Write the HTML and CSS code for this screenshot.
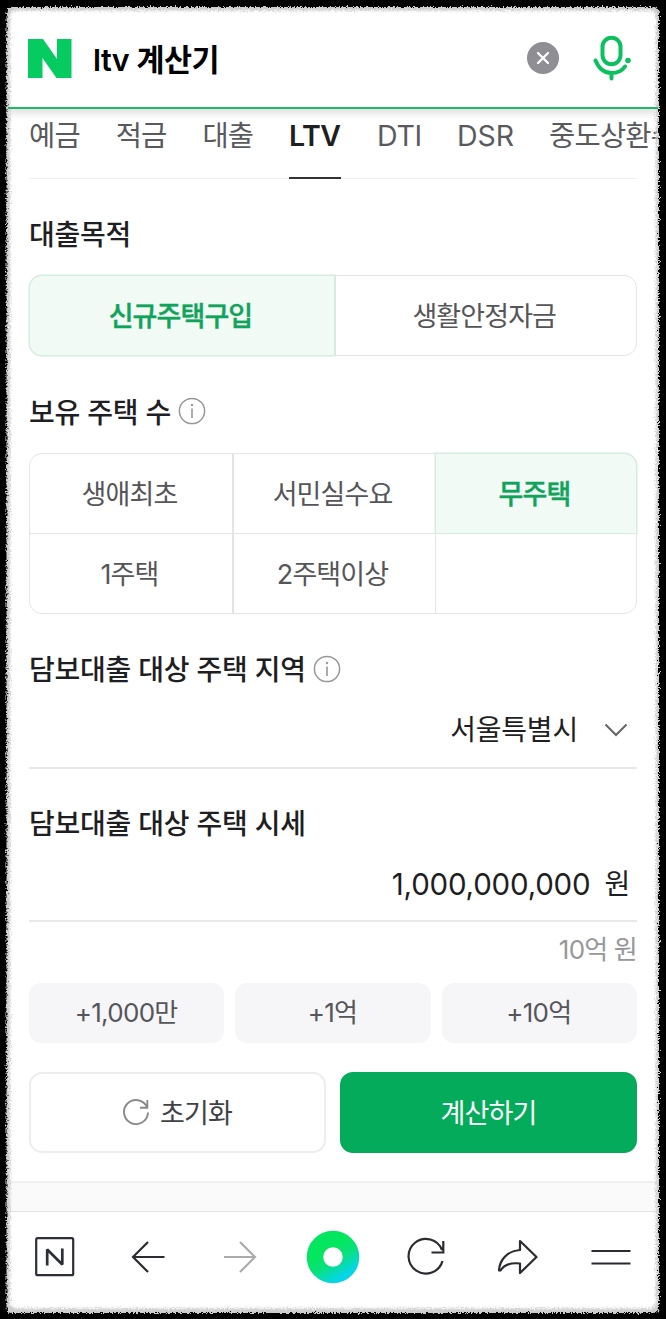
FILE: index.html
```html
<!DOCTYPE html>
<html lang="ko">
<head>
<meta charset="utf-8">
<title>ltv 계산기</title>
<link rel="stylesheet" href="styles.css">
</head>
<body>
<div class="screen">
  <header class="search">
    <svg class="logo" width="44" height="40" viewBox="0 0 44 40"><path d="M0 0H15L29 20V0H43.500V39H28.500L14.500 19V39H0Z" fill="#06cb60"/></svg>
    <span class="query">ltv 계산기</span>
    <svg class="clear" width="32" height="32" viewBox="0 0 32 32"><circle cx="16" cy="16" r="16" fill="#8e8e93"/><path d="M11 11L21 21M21 11L11 21" stroke="#fff" stroke-width="2.300" stroke-linecap="round"/></svg>
    <svg class="mic" width="38" height="46" viewBox="0 0 38 46" fill="none" stroke="#0bc15e" stroke-width="4" stroke-linecap="round"><rect x="9.500" y="2.700" width="18" height="26.500" rx="9"/><path d="M2.500 25.500C6 34 12 38 18.500 38C24.500 38 29 36 32 31.500M18.500 38V43.500"/><circle cx="35" cy="25.500" r="2.800" fill="#0bc15e" stroke="none"/></svg>
  </header>
  <nav class="tabs">
    <span class="tab w51">예금</span><span class="tab w51">적금</span><span class="tab w51">대출</span><span class="tab on">LTV</span><span class="tab dti">DTI</span><span class="tab dsr">DSR</span><span class="tab">중도상환수</span>
  </nav>
  <main class="form">
    <h2 class="label purpose">대출목적</h2>
    <div class="seg two">
      <div class="cell picked">신규주택구입</div><div class="cell">생활안정자금</div>
    </div>
    <h2 class="label owned">보유 주택 수<svg class="info" width="28" height="28" viewBox="0 0 28 28"><circle cx="14" cy="14" r="12.600" fill="none" stroke="#98989b" stroke-width="1.500"/><circle cx="14" cy="8" r="1.200" fill="#98989b"/><path d="M14 11.500V21" stroke="#98989b" stroke-width="1.600"/></svg></h2>
    <div class="seg three">
      <div class="cell">생애최초</div><div class="cell">서민실수요</div><div class="cell picked">무주택</div>
      <div class="cell">1주택</div><div class="cell">2주택이상</div><div class="cell"></div>
    </div>
    <h2 class="label region">담보대출 대상 주택 지역<svg class="info" width="28" height="28" viewBox="0 0 28 28"><circle cx="14" cy="14" r="12.600" fill="none" stroke="#98989b" stroke-width="1.500"/><circle cx="14" cy="8" r="1.200" fill="#98989b"/><path d="M14 11.500V21" stroke="#98989b" stroke-width="1.600"/></svg></h2>
    <div class="field select">서울특별시<svg width="24" height="14" viewBox="0 0 24 14" fill="none" stroke="#666" stroke-width="2"><path d="M1.500 1.500L12 12L22.500 1.500"/></svg></div>
    <h2 class="label price">담보대출 대상 주택 시세</h2>
    <div class="field amount"><span class="num">1,000,000,000</span><span class="won">원</span></div>
    <p class="hint">10억 원</p>
    <div class="chips"><span class="chip">+1,000만</span><span class="chip">+1억</span><span class="chip">+10억</span></div>
    <div class="actions">
      <div class="btn"><svg width="26" height="26" viewBox="0 0 26 26" fill="none" stroke="#8a8a8c" stroke-width="1.900"><path d="M24 8.200A12 12 0 1 0 25 13.500M24.300 1V8.800H17"/></svg>초기화</div>
      <div class="btn go">계산하기</div>
    </div>
  </main>
  <div class="divider"></div>
  <footer class="toolbar">
    <svg width="40" height="40" viewBox="0 0 40 40" fill="none" stroke="#2d2f38"><rect x="1.200" y="1.200" width="37" height="37" rx="1.500" stroke-width="2.200"/><path d="M12.200 28.500V12.500L27.300 27.500V11.500" stroke-width="2.700" stroke-linejoin="bevel"/></svg>
    <svg width="40" height="40" viewBox="0 0 40 40" fill="none" stroke="#2b2b30" stroke-width="2.200"><path d="M36.500 20H5.500M20 5L5 20L20 35"/></svg>
    <svg width="40" height="40" viewBox="0 0 40 40" fill="none" stroke="#ababad" stroke-width="2.200"><path d="M4 20H35M20 5L35 20L20 35"/></svg>
    <svg class="home" width="54" height="54" viewBox="0 0 54 54"><defs><linearGradient id="g" x1=".3" y1=".2" x2=".8" y2="1"><stop offset=".15" stop-color="#05e660"/><stop offset=".5" stop-color="#08e17c"/><stop offset="1" stop-color="#06d5e6"/></linearGradient></defs><circle cx="27" cy="27" r="18" fill="none" stroke="url(#g)" stroke-width="16.500"/></svg>
    <svg width="40" height="40" viewBox="0 0 40 40" fill="none" stroke="#2b2b30" stroke-width="2.200"><path d="M36 13A17.300 17.300 0 1 0 36.500 24M37.300 4V15.500H25.500"/></svg>
    <svg width="40" height="40" viewBox="0 0 40 40" fill="none" stroke="#2b2b30" stroke-width="2.200" stroke-linejoin="round"><path d="M22 4L38.500 20L22 36V26.500C13 25.500 6.500 27 2.500 33.500H1C1.500 23 9 14 22 13Z"/></svg>
    <svg width="40" height="40" viewBox="0 0 40 40" fill="none" stroke="#2b2b30" stroke-width="2.200"><path d="M.500 14H39.500M.500 26.500H39.500"/></svg>
  </footer>
</div>
<svg class="edge" width="666" height="1319" viewBox="0 0 666 1319">
  <defs>
    <filter id="haze" filterUnits="userSpaceOnUse" x="0" y="0" width="666" height="1319" color-interpolation-filters="sRGB">
      <feGaussianBlur stdDeviation="1.300" result="b"/>
      <feTurbulence type="fractalNoise" baseFrequency=".7" numOctaves="2" seed="4"/>
      <feDisplacementMap in="b" scale="7" xChannelSelector="R" yChannelSelector="G"/>
    </filter>
    <filter id="rough" filterUnits="userSpaceOnUse" x="0" y="0" width="666" height="1319" color-interpolation-filters="sRGB">
      <feTurbulence type="fractalNoise" baseFrequency=".6" numOctaves="2" seed="8"/>
      <feDisplacementMap in="SourceGraphic" scale="6" xChannelSelector="R" yChannelSelector="G"/>
    </filter>
  </defs>
  <path filter="url(#haze)" fill="#ccc" fill-rule="evenodd" d="M-20 -20H686V1339H-20ZM17 10.500H649Q656 10.500 656 17V1301Q656 1308.500 649 1308.500H17Q10 1308.500 10 1301V17Q10 10.500 17 10.500Z"/>
  <path filter="url(#rough)" fill="#000" fill-rule="evenodd" d="M-20 -20H686V1339H-20ZM12 7H653Q659 7 659 13V1307Q659 1313 653 1313H12Q6.500 1313 6.500 1307V13Q6.500 7 12 7Z"/>
  <path d="M8 108H658" stroke="#1fb965" stroke-width="2"/>
</svg>
</body>
</html>
```
FILE: styles.css
```css
* { box-sizing: border-box; }
body {
  margin: 0;
  background: #000;
  font-family: Inter, "Noto Sans CJK KR", sans-serif;
  color: #1e1e23;
  position: relative;
  width: 666px;
  height: 1319px;
  overflow: hidden;
}
.screen { padding: 0 7px; background: #fff; height: 1319px; }
.search {
  height: 109px;
  padding: 8px 21px 0;
  border-bottom: 2px solid #1fb965;
  box-shadow: 0 4px 8px rgba(0, 0, 0, .13);
  display: flex;
  align-items: center;
}
.logo { margin-top: 3px; }
.query { flex: 1; margin-left: 21px; font-size: 30.500px; font-weight: 600; letter-spacing: -.5px; color: #000; }
.mic { margin-left: 33px; margin-right: 7px; margin-top: 1px; }
.clear { margin-right: 0; position: relative; left: -1px; }
.tabs {
  margin: 0 0 0 22px;
  height: 70px;
  display: flex;
  gap: 36px;
  white-space: nowrap;
  overflow: hidden;
  background: linear-gradient(#efefef, #efefef) 0 68.500px / 608px 1.500px no-repeat;
}
.tab { height: 70px; line-height: 53px; font-size: 28.500px; letter-spacing: -.8px; color: #5a5a5e; flex: none; }
.w51 { width: 50.700px; }
.on { width: 52px; color: #1e1e23; font-weight: 600; letter-spacing: -.5px; border-bottom: 2px solid #333; }
.dti { width: 44px; letter-spacing: -.3px; }
.dsr { width: 56px; letter-spacing: -.1px; }
.form { padding: 0 22px; }
.label {
  margin: 0;
  font-size: 28px;
  font-weight: 500;
  letter-spacing: -.24px;
  display: flex;
  align-items: center;
  white-space: nowrap;
}
.info { margin-left: 7px; }
.purpose { height: 96px; padding-top: 12px; }
.owned { height: 97px; padding-top: 12px; }
.region { height: 88px; padding-top: 20px; }
.price { height: 86px; padding-top: 19px; }
.owned .info, .region .info { margin-top: 1px; }
.seg {
  display: grid;
  gap: 1.500px;
  background: #e3e4e6;
  border: 1.500px solid #e3e4e6;
  border-radius: 13px;
}
.two { height: 81px; grid-template-columns: 304px 1fr; }
.three { height: 161px; grid-template: 1fr 1fr / 202px 201px 1fr; }
.cell {
  display: flex;
  align-items: center;
  justify-content: center;
  background: #fff;
  font-size: 27px;
  letter-spacing: -.9px;
  padding: 0 3px 2px 0;
  color: #55555a;
}
.picked { background: #f2faf6; color: #10a45a; font-weight: 500; -webkit-text-stroke: .4px #10a45a; box-shadow: 0 0 0 1.500px #d3ede0; }
.two .cell:first-child { border-radius: 12px 0 0 12px; }
.two .cell:last-child { border-radius: 0 12px 12px 0; }
.three .cell:nth-child(1) { border-radius: 12px 0 0 0; }
.three .cell:nth-child(3) { border-radius: 0 12px 0 0; }
.three .cell:nth-child(4) { border-radius: 0 0 0 12px; }
.three .cell:nth-child(6) { border-radius: 0 0 12px 0; }
.field {
  height: 67px;
  border-bottom: 2px solid #e9e9eb;
  display: flex;
  justify-content: flex-end;
  align-items: center;
  font-size: 28px;
  letter-spacing: -.2px;
}
.select { padding: 0 9px 13px 0; gap: 26px; }
.select svg { margin-top: 4px; }
.amount { padding: 0 7px 8px 0; gap: 14px; }
.num { font-size: 29.500px; letter-spacing: -.2px; }
.won { margin-top: -3px; }
.hint { margin: 0; height: 61px; line-height: 56px; text-align: right; font-size: 26px; letter-spacing: -.8px; color: #97979b; }
.chips { display: grid; grid-template-columns: repeat(3, 1fr); gap: 11px; }
.chip {
  height: 60px;
  padding: 0 1px 5px 0;
  border-radius: 12px;
  background: #f6f6f8;
  display: flex;
  align-items: center;
  justify-content: center;
  font-size: 26px;
  letter-spacing: -.7px;
  color: #55555a;
}
.actions { margin-top: 29px; display: grid; grid-template-columns: 1fr 1fr; gap: 14px; }
.btn {
  height: 81px;
  padding-bottom: 3px;
  border: 2px solid #ededee;
  border-radius: 13px;
  display: flex;
  align-items: center;
  justify-content: center;
  gap: 11px;
  font-size: 27px;
  letter-spacing: -.9px;
  color: #424246;
}
.btn svg { margin-top: 2px; }
.go { background: #03ab5b; border-color: #03ab5b; color: #fff; }
.divider { margin-top: 28px; height: 31px; background: #fafafb; border-top: 2px solid #f1f1f2; border-bottom: 1.500px solid #e2e2e4; }
.toolbar { display: flex; justify-content: space-between; align-items: center; height: 89px; padding: 0 28px; }
.home { margin: 0 -7px; }
.edge { position: absolute; left: 0; top: 0; }
```
